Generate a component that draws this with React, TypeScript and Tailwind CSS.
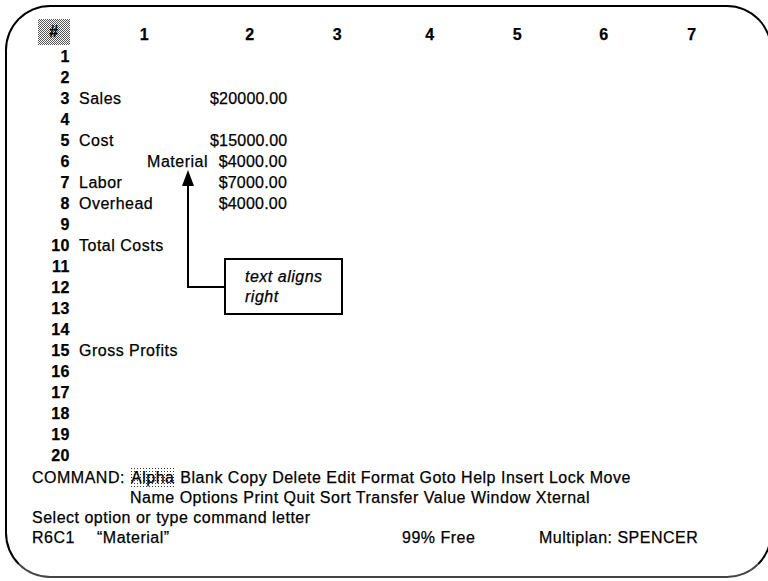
const rows: { label?: string; right?: string; value?: string }[] = [
  {},
  {},
  { label: "Sales", value: "$20000.00" },
  {},
  { label: "Cost", value: "$15000.00" },
  { right: "Material", value: "$4000.00" },
  { label: "Labor", value: "$7000.00" },
  { label: "Overhead", value: "$4000.00" },
  {},
  { label: "Total Costs" },
  {},
  {},
  {},
  {},
  { label: "Gross Profits" },
  {},
  {},
  {},
  {},
  {},
]

const headers = [
  { n: "1", w: "w-[131px]" },
  { n: "2", w: "w-[80px]" },
  { n: "3", w: "w-[95px]" },
  { n: "4", w: "w-[90px]" },
  { n: "5", w: "w-[85px]" },
  { n: "6", w: "w-[88px]" },
  { n: "7", w: "w-[88px]" },
]

// dithered cursor cells
const checker =
  "bg-[repeating-conic-gradient(#555_0_25%,#fff_0_50%)] bg-[length:2px_2px]"
const dots =
  "bg-[radial-gradient(circle,#333_0.8px,transparent_1px)] bg-[length:3px_3px]"

export default function App() {
  return (
    <div className="relative w-[768px] h-[581px] overflow-hidden bg-white text-black font-['Liberation_Sans',Arial,sans-serif] text-[16px] tracking-[0.5px] [-webkit-text-stroke:0.25px_#000]">
      <div className="ml-[5px] mt-[5px] w-[767px] h-[573px] border-2 border-black border-b-[#444] rounded-[45px] pt-[17px] pl-[31px]">
        {/* column header */}
        <div className="flex h-[22px] leading-[22px] font-bold">
          <div className={`w-[32px] h-[26px] -mt-[5px] flex items-center justify-center ${checker}`}>#</div>
          <div className="w-[9px]" />
          {headers.map((h) => (
            <div key={h.n} className={`${h.w} text-center`}>
              {h.n}
            </div>
          ))}
        </div>

        {/* sheet rows */}
        {rows.map((r, i) => (
          <div key={i} className="flex h-[21px] leading-[21px] whitespace-nowrap">
            <div className="w-[32px] text-right font-bold">{i + 1}</div>
            <div className="w-[9px]" />
            <div className="w-[131px] flex">
              {r.label && <span>{r.label}</span>}
              {r.right && <span className="ml-auto pr-[2px]">{r.right}</span>}
            </div>
            <div className="w-[80px] text-right pr-[3px] tracking-[0.2px]">{r.value}</div>
          </div>
        ))}

        {/* command area */}
        <div className="-ml-[6px] mt-[2px] leading-[20px] whitespace-nowrap">
          <div className="flex">
            <span className="w-[98px]">COMMAND:</span>
            <div>
              <div>
                <span className={`${dots} px-[1px] py-[2px]`}>Alpha</span> Blank Copy Delete Edit Format Goto Help Insert Lock Move
              </div>
              <div>Name Options Print Quit Sort Transfer Value Window Xternal</div>
            </div>
          </div>
          <div>Select option or type command letter</div>
          <div className="flex">
            <span className="w-[65px]">R6C1</span>
            <span className="w-[305px]">“Material”</span>
            <span className="w-[137px]">99% Free</span>
            <span>Multiplan: SPENCER</span>
          </div>
        </div>
      </div>

      {/* annotation arrow */}
      <svg className="absolute left-0 top-0" width="768" height="581">
        <polyline points="188,182 188,287 225,287" fill="none" stroke="#000" strokeWidth="2" />
        <polygon points="188,170 182,186 194,186" fill="#000" />
      </svg>
      <div className="absolute left-[224px] top-[258px] w-[119px] h-[57px] border-2 border-black bg-white pl-[19px] pt-[7px] italic leading-[20px]">
        <div>text aligns</div>
        <div>right</div>
      </div>
    </div>
  )
}
